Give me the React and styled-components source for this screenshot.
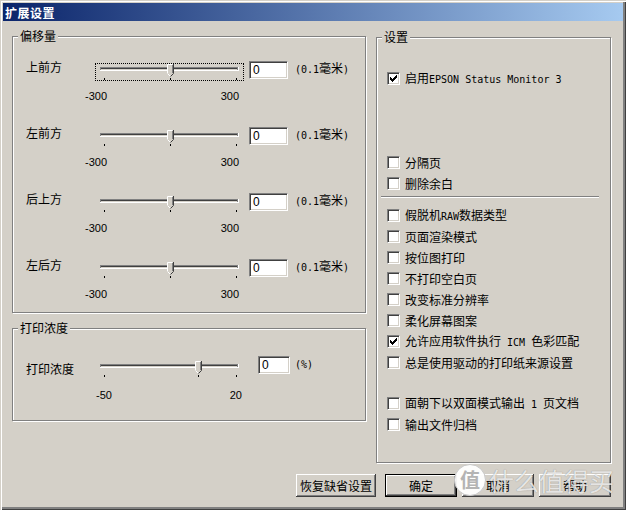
import styled, { createGlobalStyle } from "styled-components";

const GlobalStyle = createGlobalStyle`
  html, body { margin: 0; padding: 0; background: #D4D0C8; }
  body {
    font-family: "Liberation Sans", "Noto Sans CJK SC", sans-serif;
    font-size: 12px;
    color: #000;
  }
`;

// window frame
const Window = styled.div`
  position: relative;
  width: 626px;
  height: 510px;
  box-sizing: border-box;
  padding: 3px;
  background: #D4D0C8;
  box-shadow: inset 1px 1px 0 #D4D0C8, inset 2px 2px 0 #fff,
    inset -1px -1px 0 #404040, inset -3px -3px 0 #808080;
  display: flex;
  flex-direction: column;
`;

const TitleBar = styled.div`
  height: 18px;
  flex-shrink: 0;
  display: flex;
  align-items: center;
  padding-left: 2px;
  background: linear-gradient(to right, #0a246a, #a6caf0);
  color: #fff;
  font-family: "Noto Sans CJK SC", sans-serif;
  font-weight: bold;
  font-size: 12px;
  letter-spacing: 0.5px;
`;

const Body = styled.div`
  display: flex;
  flex-direction: column;
  padding: 15px 12px 0 9px;
`;

const Columns = styled.div`
  display: flex;
  gap: 10px;
  align-items: flex-start;
`;

const LeftCol = styled.div`
  width: 354px;
  display: flex;
  flex-direction: column;
  gap: 15px;
`;

// etched group box
const Group = styled.div`
  position: relative;
  box-sizing: border-box;
  width: ${(p) => p.$w}px;
  margin-top: ${(p) => p.$mt || 0}px;
  border: 1px solid #808080;
  box-shadow: inset 1px 1px 0 #fff, 1px 1px 0 #fff;
  padding: ${(p) => p.$pad};
  display: flex;
  flex-direction: column;
`;

const Legend = styled.span`
  position: absolute;
  top: -7px;
  left: 5px;
  padding: 0 2px;
  background: #D4D0C8;
  line-height: 12px;
  font-family: "Noto Sans CJK SC", sans-serif;
`;

const Rows = styled.div`
  display: flex;
  flex-direction: column;
  gap: 27px;
`;

const SliderRow = styled.div`
  display: flex;
  align-items: flex-start;
`;

const RowLabel = styled.span`
  width: 69px;
  flex-shrink: 0;
  margin-top: ${(p) => p.$mt}px;
  line-height: 12px;
  font-family: "Noto Sans CJK SC", sans-serif;
`;

const SliderBlock = styled.div`
  width: 149px;
  flex-shrink: 0;
  display: flex;
  flex-direction: column;
`;

const TrackArea = styled.div`
  height: 18px;
  outline: ${(p) => (p.$focus ? "1px dotted #000" : "none")};
  outline-offset: -1px;
`;

const TrackSvg = styled.svg`
  display: block;
`;

const ScaleRow = styled.div`
  display: flex;
  justify-content: space-between;
  margin: ${(p) => p.$mt}px ${(p) => p.$trail}px 0 ${(p) => p.$lead}px;
  font-size: 11px;
  line-height: 12px;
`;

const Edit = styled.div`
  box-sizing: border-box;
  width: ${(p) => p.$w}px;
  height: 18px;
  margin-left: ${(p) => p.$gap}px;
  margin-top: ${(p) => p.$mt}px;
  flex-shrink: 0;
  background: #fff;
  border-top: 1px solid #808080;
  border-left: 1px solid #808080;
  border-right: 1px solid #fff;
  border-bottom: 1px solid #fff;
  box-shadow: inset 1px 1px 0 #404040, inset -1px -1px 0 #D4D0C8;
  padding: 2px 0 0 3px;
  font-size: 12px;
  line-height: 13px;
`;

const Unit = styled.span`
  margin-left: ${(p) => p.$gap}px;
  margin-top: ${(p) => p.$mt}px;
  line-height: 12px;
  white-space: nowrap;
  font-family: "Noto Sans CJK SC", sans-serif;
`;

const Mono = styled.span`
  font-family: "DejaVu Sans Mono", "Liberation Mono", monospace;
  font-size: 10px;
  white-space: pre;
`;

const CheckRow = styled.div`
  display: flex;
  align-items: center;
  gap: 5px;
  height: 13px;
  margin-top: ${(p) => (p.$mt === undefined ? 8 : p.$mt)}px;
  line-height: 12px;
  white-space: nowrap;
  font-family: "Noto Sans CJK SC", sans-serif;
`;

const Box = styled.span`
  width: 13px;
  height: 13px;
  flex-shrink: 0;
  box-sizing: border-box;
  background: #fff;
  border-top: 1px solid #808080;
  border-left: 1px solid #808080;
  border-right: 1px solid #fff;
  border-bottom: 1px solid #fff;
  box-shadow: inset 1px 1px 0 #404040, inset -1px -1px 0 #D4D0C8;
  position: relative;
`;

const CheckSvg = styled.svg`
  position: absolute;
  left: -1px;
  top: -1px;
`;

const Separator = styled.div`
  height: 0;
  border-top: 1px solid #808080;
  border-bottom: 1px solid #fff;
  margin: 6px 11px 0 -6px;
`;

const ButtonRow = styled.div`
  display: flex;
  justify-content: flex-end;
  margin-top: 11px;
`;

const Button = styled.button`
  box-sizing: border-box;
  width: ${(p) => p.$w}px;
  height: 23px;
  margin-left: ${(p) => p.$ml || 0}px;
  padding: 0;
  background: #D4D0C8;
  border: ${(p) => (p.$default ? "1px solid #000" : "none")};
  box-shadow: inset -1px -1px 0 #404040, inset 1px 1px 0 #fff,
    inset -2px -2px 0 #808080;
  font-family: "Noto Sans CJK SC", sans-serif;
  font-size: 12px;
  color: #000;
`;

// watermark over the buttons
const Watermark = styled.div`
  position: absolute;
  left: 454px;
  top: 464px;
  display: flex;
  align-items: center;
  gap: 3px;
  pointer-events: none;
`;

const Badge = styled.div`
  width: 32px;
  height: 32px;
  border-radius: 50%;
  background: rgba(255, 255, 255, 0.95);
  border: 1px solid #c8c8c8;
  box-sizing: border-box;
  display: flex;
  align-items: center;
  justify-content: center;
  color: #b4b4b4;
  font-family: "Noto Sans CJK SC", sans-serif;
  font-size: 20px;
  font-weight: bold;
  line-height: 1;
`;

const MarkText = styled.span`
  font-family: "Noto Sans CJK SC", sans-serif;
  font-size: 25px;
  line-height: 1;
  color: rgba(255, 255, 255, 0.8);
  text-shadow: 0 0 1px rgba(0, 0, 0, 0.4);
`;

function Track({ t }) {
  const cx = Math.round(9 + t * 132);
  const l = cx - 3;
  const r = cx + 3;
  return (
    <TrackSvg width="149" height="18">
      <rect x="5" y="4" width="139" height="4" fill="#fff" />
      <rect x="5" y="4" width="138" height="3" fill="#808080" />
      <rect x="6" y="5" width="136" height="1" fill="#404040" />
      <rect x="6" y="6" width="136" height="1" fill="#D4D0C8" />
      {[9, cx, 141].map((x) => (
        <rect key={x} x={x} y="15" width="1" height="2" fill="#000" />
      ))}
      <path d={`M${l} 1H${r}V10L${cx} 13L${l} 10Z`} fill="#D4D0C8" />
      <path d={`M${l + 0.5} 10V1.5H${r - 0.5}`} stroke="#fff" fill="none" />
      <path d={`M${l + 0.5} 10.5L${cx + 0.5} 13.5`} stroke="#fff" fill="none" />
      <path d={`M${r + 0.5} 1V10.5L${cx + 0.5} 13.5`} stroke="#404040" fill="none" />
      <path d={`M${r - 0.5} 2V10`} stroke="#808080" fill="none" />
    </TrackSvg>
  );
}

const checkPixels = [
  [3, 5], [4, 6], [5, 7], [6, 6], [7, 5], [8, 4], [9, 3],
];

function Check({ checked, children, mt }) {
  return (
    <CheckRow $mt={mt}>
      <Box>
        {checked && (
          <CheckSvg width="13" height="13">
            {checkPixels.map(([x, y]) => (
              <rect key={x} x={x} y={y} width="1" height="3" fill="#000" />
            ))}
          </CheckSvg>
        )}
      </Box>
      <span>{children}</span>
    </CheckRow>
  );
}

const offsets = ["上前方", "左前方", "后上方", "左后方"];

export default function App() {
  return (
    <>
      <GlobalStyle />
      <Window>
        <TitleBar>扩展设置</TitleBar>
        <Body>
          <Columns>
            <LeftCol>
              <Group $w={354} $pad="26px 0 12px 13px">
                <Legend>偏移量</Legend>
                <Rows>
                  {offsets.map((name, i) => (
                    <SliderRow key={name}>
                      <RowLabel $mt={-2}>{name}</RowLabel>
                      <SliderBlock>
                        <TrackArea $focus={i === 0}>
                          <Track t={0.5} />
                        </TrackArea>
                        <ScaleRow $mt={9} $lead={-10} $trail={5}>
                          <span>-300</span>
                          <span>300</span>
                        </ScaleRow>
                      </SliderBlock>
                      <Edit $w={39} $gap={5} $mt={-2}>0</Edit>
                      <Unit $gap={7} $mt={-1}>
                        <Mono>(0.1</Mono>毫米<Mono>)</Mono>
                      </Unit>
                    </SliderRow>
                  ))}
                </Rows>
              </Group>
              <Group $w={354} $pad="31px 0 19px 13px">
                <Legend>打印浓度</Legend>
                <SliderRow>
                  <RowLabel $mt={3}>打印浓度</RowLabel>
                  <SliderBlock>
                    <TrackArea>
                      <Track t={50 / 70} />
                    </TrackArea>
                    <ScaleRow $mt={11} $lead={1} $trail={2}>
                      <span>-50</span>
                      <span>20</span>
                    </ScaleRow>
                  </SliderBlock>
                  <Edit $w={32} $gap={14} $mt={-4}>0</Edit>
                  <Unit $gap={5} $mt={-3}>
                    <Mono>(%)</Mono>
                  </Unit>
                </SliderRow>
              </Group>
            </LeftCol>
            <Group $w={235} $mt={1} $pad="34px 0 31px 10px">
              <Legend>设置</Legend>
              <Check checked mt={0}>
                启用<Mono>EPSON Status Monitor 3</Mono>
              </Check>
              <Check mt={71}>分隔页</Check>
              <Check>删除余白</Check>
              <Separator />
              <Check mt={11}>
                假脱机<Mono>RAW</Mono>数据类型
              </Check>
              <Check>页面渲染模式</Check>
              <Check>按位图打印</Check>
              <Check>不打印空白页</Check>
              <Check>改变标准分辨率</Check>
              <Check>柔化屏幕图案</Check>
              <Check checked>
                允许应用软件执行<Mono> ICM </Mono>色彩匹配
              </Check>
              <Check>总是使用驱动的打印纸来源设置</Check>
              <Check mt={28}>
                面朝下以双面模式输出<Mono> 1 </Mono>页文档
              </Check>
              <Check>输出文件归档</Check>
            </Group>
          </Columns>
          <ButtonRow>
            <Button $w={80}>恢复缺省设置</Button>
            <Button $w={72} $ml={9} $default>
              确定
            </Button>
            <Button $w={72} $ml={5}>取消</Button>
            <Button $w={72} $ml={5}>帮助</Button>
          </ButtonRow>
        </Body>
        <Watermark>
          <Badge>值</Badge>
          <MarkText>什么值得买</MarkText>
        </Watermark>
      </Window>
    </>
  );
}
